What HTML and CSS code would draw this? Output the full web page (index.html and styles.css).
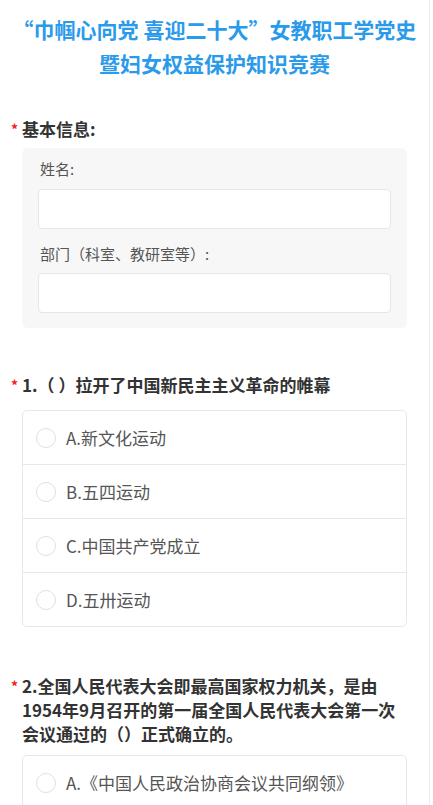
FILE: index.html
```html
<!DOCTYPE html>
<html lang="zh-CN">
<head>
<meta charset="utf-8">
<title>知识竞赛</title>
<link rel="stylesheet" href="styles.css">
</head>
<body>
<div class="page">
  <h1 class="title">“巾帼心向党 喜迎二十大”女教职工学党史<br>暨妇女权益保护知识竞赛</h1>

  <section class="question q-info">
    <div class="q-title"><span class="req">*</span>基本信息:</div>
    <div class="info-box">
      <div class="field-label">姓名:</div>
      <div class="field-input"></div>
      <div class="field-label second">部门（科室、教研室等）:</div>
      <div class="field-input"></div>
    </div>
  </section>

  <section class="question q1">
    <div class="q-title"><span class="req">*</span>1.（ ）拉开了中国新民主主义革命的帷幕</div>
    <div class="options">
      <div class="option"><span class="radio"></span><span class="opt-text">A.新文化运动</span></div>
      <div class="option"><span class="radio"></span><span class="opt-text">B.五四运动</span></div>
      <div class="option"><span class="radio"></span><span class="opt-text">C.中国共产党成立</span></div>
      <div class="option"><span class="radio"></span><span class="opt-text">D.五卅运动</span></div>
    </div>
  </section>

  <section class="question q2">
    <div class="q-title multi"><span class="req">*</span>2.全国人民代表大会即最高国家权力机关，是由1954年9月召开的第一届全国人民代表大会第一次会议通过的（）正式确立的。</div>
    <div class="options">
      <div class="option"><span class="radio"></span><span class="opt-text">A.《中国人民政治协商会议共同纲领》</span></div>
    </div>
  </section>
</div>
</body>
</html>
```

FILE: styles.css
```css
html, body {
  margin: 0;
  padding: 0;
  background: #fff;
}
body {
  font-family: "Noto Sans CJK SC", "Noto Sans", sans-serif;
  color: #333;
  overflow: hidden;
  height: 805px;
}
.page {
  width: 430px;
  min-height: 805px;
  border-right: 1px solid #ececec;
  box-sizing: border-box;
}
.title {
  margin: 0;
  padding: 12px 0 0;
  text-align: center;
  font-size: 21px;
  line-height: 34px;
  font-weight: 700;
  color: #2a9aea;
}
.question {
  padding: 0 22px 0 22px;
}
.q-info {
  margin-top: 37px;
}
.q1 {
  margin-top: 45px;
}
.q2 {
  margin-top: 47px;
}
.q-title {
  position: relative;
  font-size: 17px;
  line-height: 24px;
  font-weight: 700;
  color: #333;
}
.req {
  position: absolute;
  left: -11px;
  top: 0;
  color: #f02020;
  font-size: 14px;
  font-weight: 700;
}
.q-info .q-title {
  margin-bottom: 7px;
}
.info-box {
  background: #f7f7f7;
  border-radius: 6px;
  padding: 9px 16px 15px;
}
.field-label {
  font-size: 15px;
  line-height: 24px;
  color: #555;
  padding-left: 2px;
  margin-bottom: 8px;
}
.field-label.second {
  margin-top: 13px;
  margin-bottom: 7px;
}
.field-input {
  height: 40px;
  background: #fff;
  border: 1px solid #e6e6e6;
  border-radius: 4px;
  box-sizing: border-box;
}
.q1 .q-title {
  margin-bottom: 13px;
}
.q2 .q-title {
  margin-bottom: 9px;
}
.options {
  border: 1px solid #e8e8e8;
  border-radius: 5px;
  background: #fff;
}
.option {
  display: flex;
  align-items: center;
  height: 53px;
  padding-left: 13px;
  border-top: 1px solid #e8e8e8;
}
.option:first-child {
  border-top: none;
}
.radio {
  width: 20px;
  height: 20px;
  border: 1px solid #e0e0e0;
  border-radius: 50%;
  box-sizing: border-box;
  flex: none;
  background: #fff;
}
.opt-text {
  margin-left: 10px;
  font-size: 17px;
  color: #555;
  line-height: 24px;
}
```
